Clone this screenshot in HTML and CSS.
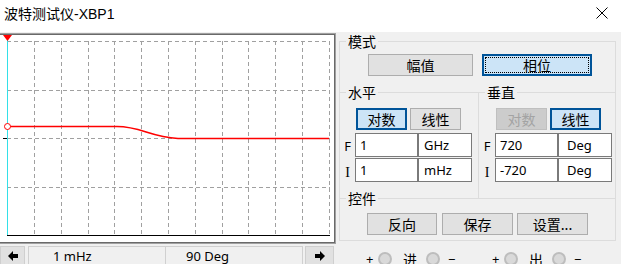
FILE: index.html
```html
<!DOCTYPE html>
<html lang="zh">
<head>
    <meta charset="UTF-8">
    <title>波特测试仪-XBP1</title>
    <link rel="stylesheet" href="styles.css">
</head>
<body>
    <div class="titlebar">
        <span class="title">波特测试仪-XBP1</span>
        <svg class="close" width="12" height="12" viewBox="0 0 12 12">
            <path d="M0.5 0.5L11.5 11.5M11.5 0.5L0.5 11.5" stroke="#000" stroke-width="1" fill="none"/>
        </svg>
    </div>
    <div class="main">
        <div class="left">
            <div class="scope">
                <div class="screen">
                    <svg width="332" height="207" viewBox="0 35 332 207">
                        <g stroke="#a0a0a0" stroke-width="1" stroke-dasharray="4 3" fill="none">
                            <path d="M7 41.5H330M7 90.5H330M7 138.5H330M7 187.5H330"/>
                            <path d="M34.5 41V235M61.5 41V235M88.5 41V235M114.5 41V235M141.5 41V235M168.5 41V235M195.5 41V235M222.5 41V235M248.5 41V235M275.5 41V235M302.5 41V235M329.5 41V235"/>
                        </g>
                        <path d="M7 235.5H330" stroke="#000" stroke-width="1"/>
                        <path d="M7.5 39V235" stroke="#33e0e8" stroke-width="1"/>
                        <path d="M3 138.5H7" stroke="#000" stroke-width="1"/>
                        <polygon points="3,35 12,35 7.5,41" fill="#f00"/>
                        <circle cx="7.5" cy="126.5" r="3" fill="#fff" stroke="#f00" stroke-width="1"/>
                        <path d="M10.5 126.5H117C141 126.5 150 137 178 138.5H329" stroke="#f00" stroke-width="1.6" fill="none"/>
                    </svg>
                </div>
            </div>
            <div class="nav">
                <div class="nav-btn">
                    <svg width="10" height="10" viewBox="0 0 10 10"><polygon points="0,5 5,0 5,3 10,3 10,7 5,7 5,10" fill="#000"/></svg>
                </div>
                <div class="nav-field">1 mHz</div>
                <div class="nav-field next">90 Deg</div>
                <div class="nav-btn last">
                    <svg width="10" height="10" viewBox="0 0 10 10"><polygon points="10,5 5,0 5,3 0,3 0,7 5,7 5,10" fill="#000"/></svg>
                </div>
            </div>
        </div>
        <div class="panel">
            <fieldset class="group mode">
                <legend>模式</legend>
                <div class="mode-btns">
                    <button class="btn mag">幅值</button>
                    <button class="btn phase on focus">相位</button>
                </div>
            </fieldset>
            <div class="axes">
                <fieldset class="group axis horiz">
                    <legend>水平</legend>
                    <div class="scale">
                        <button class="btn small on">对数</button>
                        <button class="btn small">线性</button>
                    </div>
                    <div class="limit">
                        <span class="tag">F</span><span class="cell val">1</span><span class="cell unit">GHz</span>
                    </div>
                    <div class="limit">
                        <span class="tag serif">I</span><span class="cell val">1</span><span class="cell unit">mHz</span>
                    </div>
                </fieldset>
                <fieldset class="group axis vert">
                    <legend>垂直</legend>
                    <div class="scale">
                        <button class="btn small" disabled>对数</button>
                        <button class="btn small on">线性</button>
                    </div>
                    <div class="limit">
                        <span class="tag">F</span><span class="cell val">720</span><span class="cell unit deg">Deg</span>
                    </div>
                    <div class="limit">
                        <span class="tag serif">I</span><span class="cell val">-720</span><span class="cell unit deg">Deg</span>
                    </div>
                </fieldset>
            </div>
            <fieldset class="group ctrl">
                <legend>控件</legend>
                <div class="ctrl-btns">
                    <button class="btn act">反向</button>
                    <button class="btn act">保存</button>
                    <button class="btn act">设置...</button>
                </div>
            </fieldset>
            <div class="io">
                <span class="sign">+</span><span class="dot"></span><span class="port">进</span><span class="dot"></span><span class="sign">−</span>
                <span class="sign gap">+</span><span class="dot"></span><span class="port">出</span><span class="dot"></span><span class="sign">−</span>
            </div>
        </div>
    </div>
</body>
</html>
```

FILE: styles.css
```css
body {
    margin: 0;
    width: 621px;
    height: 264px;
    overflow: hidden;
    background-color: #f0f0f0;
    font-family: "Noto Sans CJK SC", sans-serif;
    color: #000;
}

.titlebar {
    height: 32px;
    background-color: #fff;
    display: flex;
    justify-content: space-between;
    align-items: flex-start;
    padding: 4px 13px 0 4px;
    box-sizing: border-box;
}

.title {
    font-family: "Liberation Sans", "Noto Sans CJK SC", sans-serif;
    font-size: 14px;
    line-height: 20px;
}

.close {
    margin-top: 3px;
}

.main {
    display: flex;
    margin-top: 1px;
}

.left {
    width: 336px;
}

.scope {
    border: 1px solid #a0a0a0;
    border-left: none;
}

.screen {
    border: 1px solid #696969;
    border-left: none;
    background-color: #fff;
    height: 207px;
}

.screen svg {
    display: block;
}

.nav {
    display: flex;
    height: 20px;
    margin-top: 2px;
    font-family: "Noto Sans", sans-serif;
    font-size: 13px;
}

.nav-btn {
    width: 25px;
    box-sizing: border-box;
    background-color: #e1e1e1;
    border: 1px solid #cfcfcf;
    display: flex;
    justify-content: center;
    align-items: center;
}

.nav-btn.last {
    width: 29px;
    margin-left: 2px;
}

.nav-field {
    width: 138px;
    margin-left: 3px;
    box-sizing: border-box;
    border: 1px solid #d0d0d0;
    padding-left: 24px;
    line-height: 18px;
}

.nav-field.next {
    width: 137px;
    margin-left: 0;
    border-left: none;
    padding-left: 20px;
}

.panel {
    width: 277px;
    margin-left: 3px;
}

.group {
    margin: 0;
    padding: 0;
    border: 1px solid #dcdcdc;
    min-width: 0;
    box-sizing: border-box;
}

.group legend {
    margin-left: 6px;
    padding: 0 2px;
    font-size: 14px;
    line-height: 16px;
}

.mode {
    border-bottom: none;
    padding: 5px 0 16px 0;
}

.mode-btns {
    display: flex;
    gap: 9px;
    padding-left: 28px;
}

.btn {
    font-family: "Noto Sans CJK SC", sans-serif;
    font-size: 14px;
    line-height: 1;
    height: 22px;
    padding: 0;
    background-color: #e1e1e1;
    border: 1px solid #adadad;
    color: #000;
    display: flex;
    justify-content: center;
    align-items: center;
    box-sizing: border-box;
}

.btn.on {
    background-color: #cce4f7;
    border: 2px solid #005499;
}

.btn.focus {
    outline: 1px dotted #000;
    outline-offset: -4px;
}

.btn:disabled {
    background-color: #cccccc;
    border-color: #bfbfbf;
    color: #a3a3a3;
}

.mag {
    width: 105px;
}

.phase {
    width: 110px;
}

.axes {
    display: flex;
    margin-top: -8px;
}

.axis {
    border-bottom: none;
    padding: 8px 0 16px 0;
}

.horiz {
    width: 140px;
}

.vert {
    width: 137px;
    border-left: none;
}

.scale {
    display: flex;
    gap: 3px;
    padding-left: 16px;
    margin-bottom: 3px;
}

.vert .scale {
    padding-left: 17px;
}

.small {
    width: 51px;
}

.limit {
    display: flex;
    height: 24px;
    margin-bottom: 1px;
    font-family: "Noto Sans", sans-serif;
    font-size: 13px;
}

.limit:last-child {
    margin-bottom: 0;
}

.tag {
    width: 15px;
    padding-top: 3px;
    box-sizing: border-box;
    text-align: center;
    line-height: 20px;
}

.vert .tag {
    width: 16px;
}

.tag.serif {
    font-family: "Liberation Serif", serif;
    font-size: 14px;
    padding-top: 5px;
}

.cell {
    background-color: #fff;
    border: 1px solid #7a7a7a;
    box-sizing: border-box;
    line-height: 22px;
    padding-left: 4px;
}

.val {
    width: 63px;
}

.unit {
    width: 54px;
    padding-left: 5px;
}

.unit.deg {
    padding-left: 8px;
}

.ctrl {
    margin-top: -8px;
    padding: 7px 0 5px 0;
}

.ctrl-btns {
    display: flex;
    padding-left: 27px;
}

.act {
    width: 71px;
    margin-left: 4px;
}

.act:first-child {
    width: 70px;
    margin-left: 0;
    margin-right: 1px;
}

.io {
    display: flex;
    align-items: center;
    height: 14px;
    margin-top: 11px;
    padding-left: 27px;
    font-size: 14px;
    line-height: 14px;
}

.sign {
    width: 6px;
    text-align: center;
    font-family: "Noto Sans", sans-serif;
    font-size: 13px;
}

.sign.gap {
    margin-left: 38px;
}

.dot {
    width: 14px;
    height: 14px;
    margin: 0 8px 0 6px;
    box-sizing: border-box;
    border-radius: 50%;
    border: 2px solid #bdbdbd;
    background-color: #d9d9d9;
}

.port {
    margin: 0 3px;
}
```
